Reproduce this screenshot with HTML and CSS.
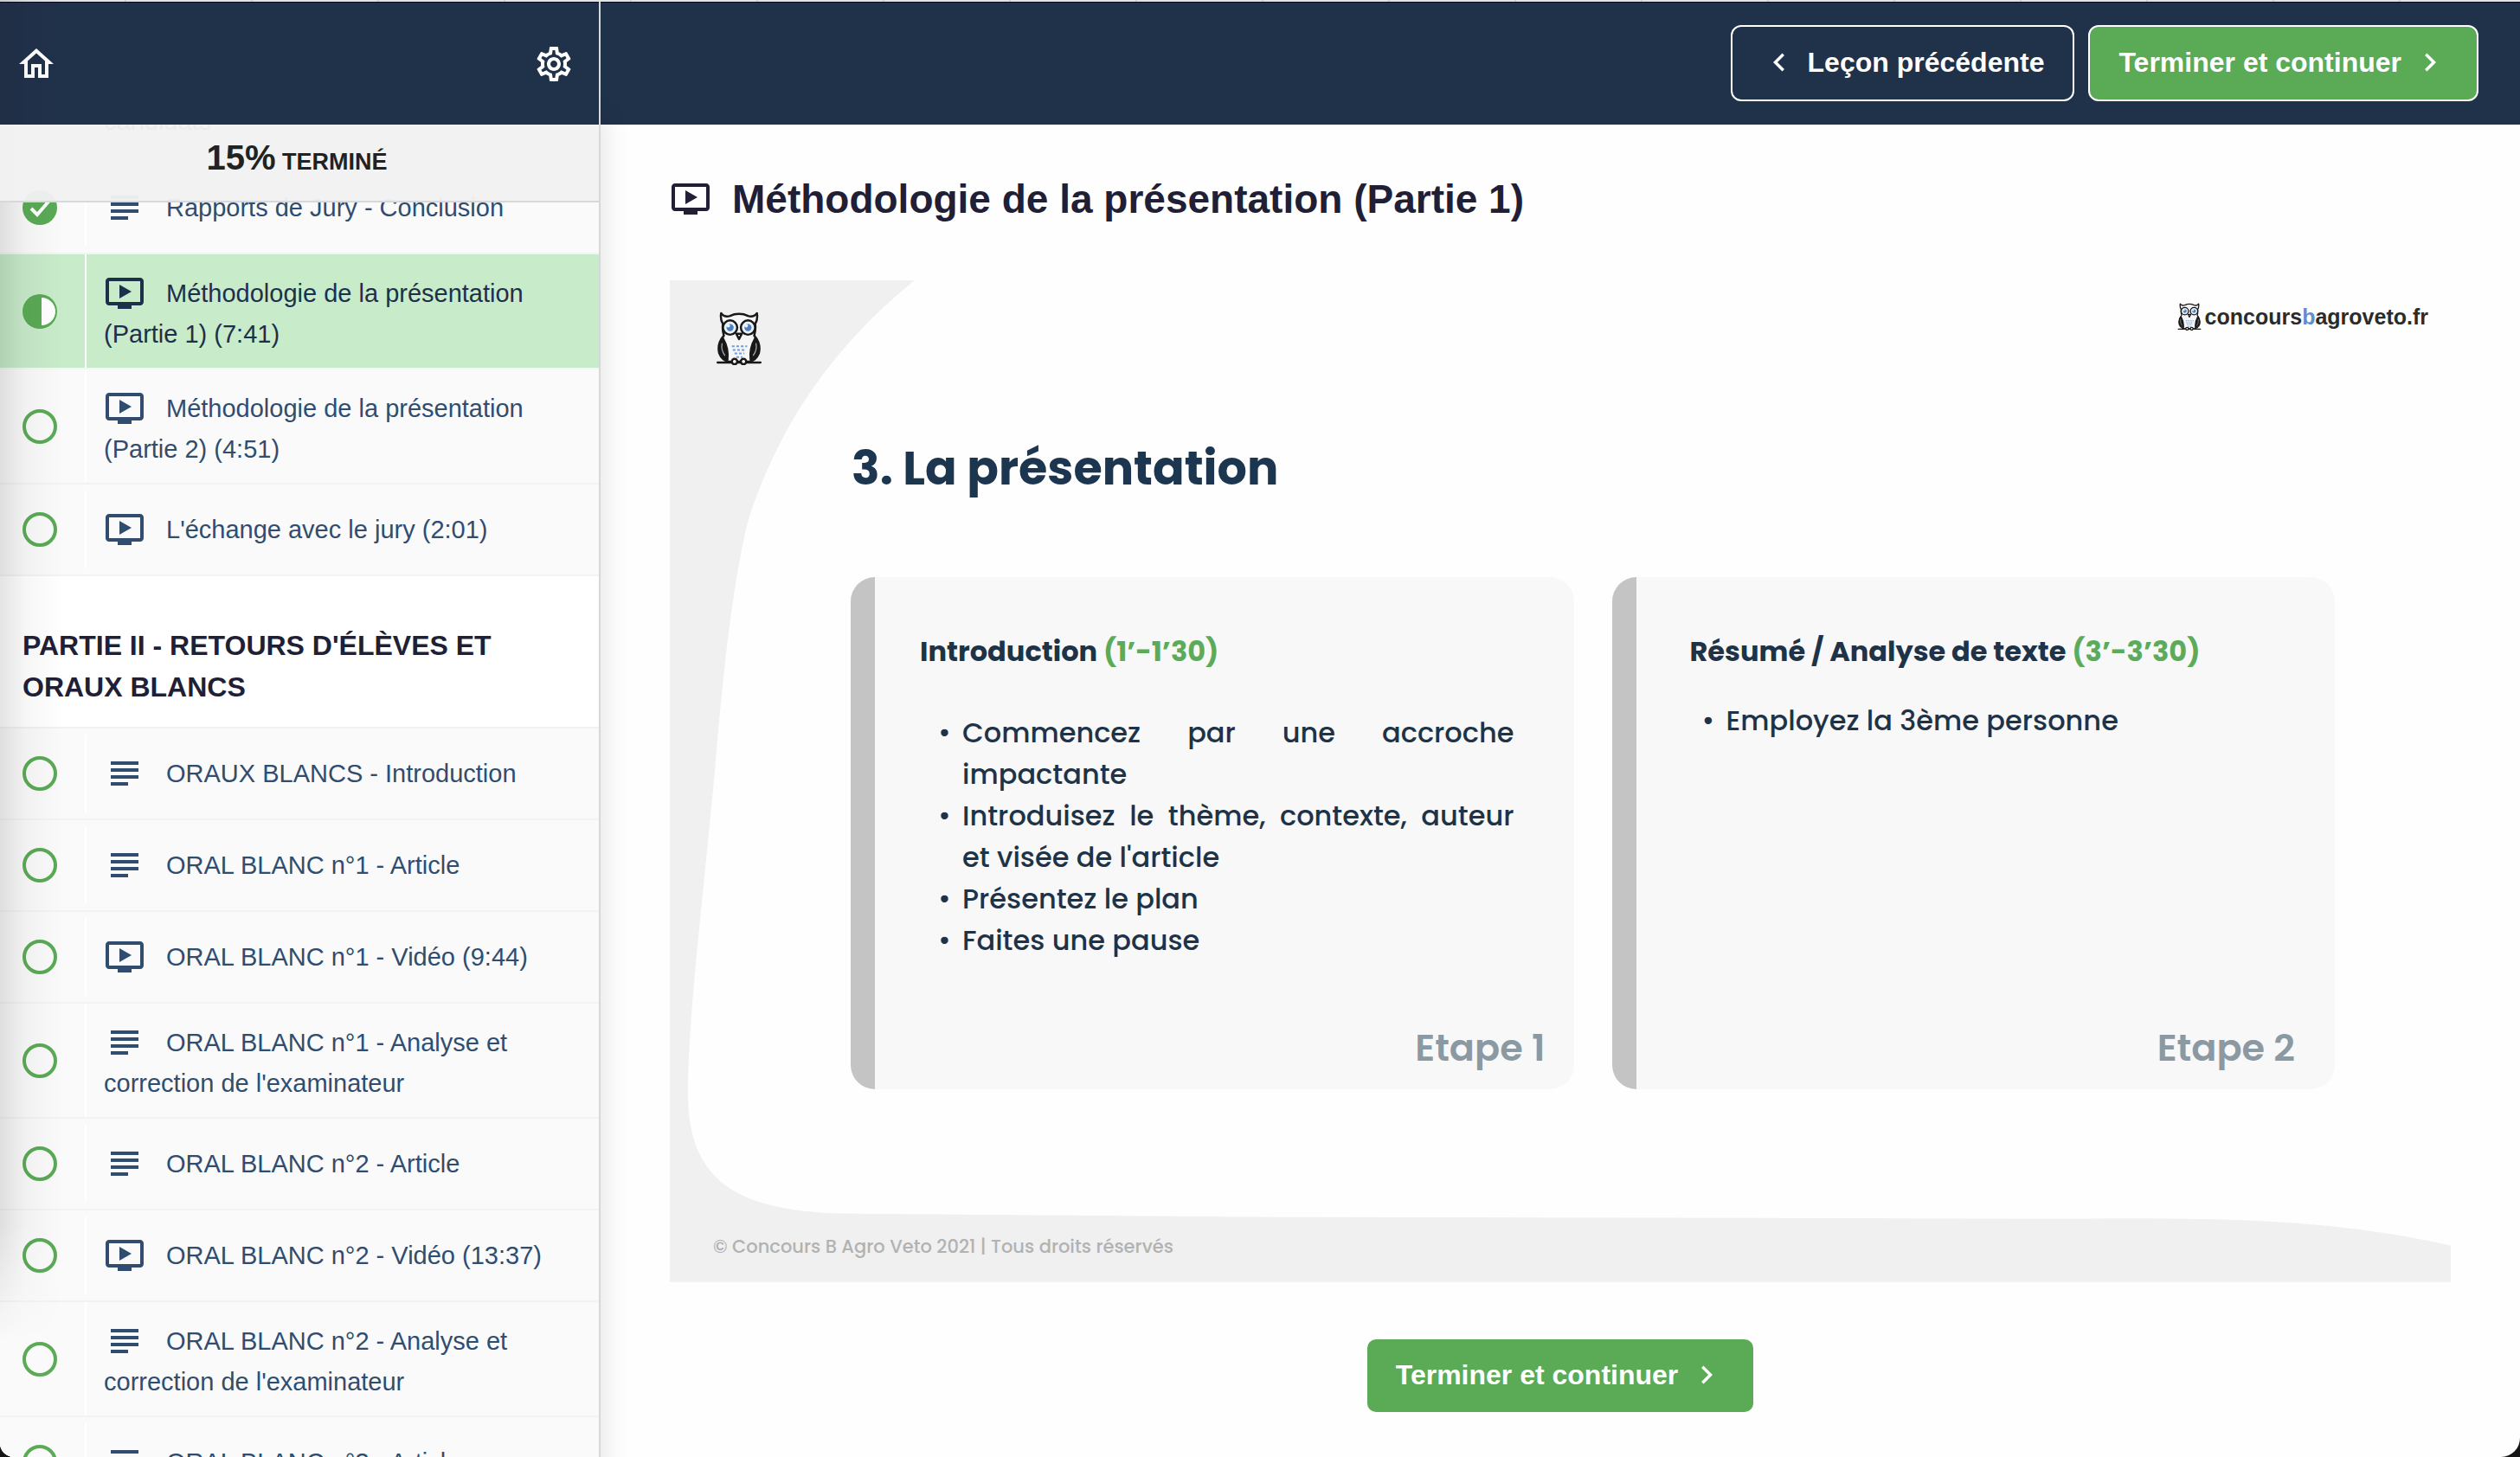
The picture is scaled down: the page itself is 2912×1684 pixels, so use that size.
FILE: index.html
```html
<!DOCTYPE html>
<html lang="fr">
<head>
<meta charset="utf-8">
<meta name="viewport" content="width=device-width, initial-scale=1">
<title>Méthodologie de la présentation (Partie 1)</title>
<link rel="stylesheet" href="styles.css">
</head>
<body>
<svg class="sprite" aria-hidden="true">
  <symbol id="i-home" viewBox="0 0 24 24"><path d="M12 5.69l5 4.5V18h-2v-6H9v6H7v-7.81l5-4.5M12 3L2 12h3v8h6v-6h2v6h6v-8h3L12 3z"/></symbol>
  <symbol id="i-gear" viewBox="0 0 24 24"><path d="M19.43 12.98c.04-.32.07-.64.07-.98 0-.34-.03-.66-.07-.98l2.11-1.65c.19-.15.24-.42.12-.64l-2-3.46c-.09-.16-.26-.25-.44-.25-.06 0-.12.01-.17.03l-2.49 1c-.52-.4-1.08-.73-1.69-.98l-.38-2.65C14.46 2.18 14.25 2 14 2h-4c-.25 0-.46.18-.49.42l-.38 2.65c-.61.25-1.17.59-1.69.98l-2.49-1c-.06-.02-.12-.03-.18-.03-.17 0-.34.09-.43.25l-2 3.46c-.13.22-.07.49.12.64l2.11 1.65c-.04.32-.07.65-.07.98 0 .33.03.66.07.98l-2.11 1.65c-.19.15-.24.42-.12.64l2 3.46c.09.16.26.25.44.25.06 0 .12-.01.17-.03l2.49-1c.52.4 1.08.73 1.69.98l.38 2.65c.03.24.24.42.49.42h4c.25 0 .46-.18.49-.42l.38-2.65c.61-.25 1.17-.59 1.69-.98l2.49 1c.06.02.12.03.18.03.17 0 .34-.09.43-.25l2-3.46c.12-.22.07-.49-.12-.64l-2.11-1.65zm-1.98-1.71c.04.31.05.52.05.73 0 .21-.02.43-.05.73l-.14 1.13.89.7 1.08.84-.7 1.21-1.27-.51-1.04-.42-.9.68c-.43.32-.84.56-1.25.73l-1.06.43-.16 1.13-.2 1.35h-1.4l-.19-1.35-.16-1.13-1.06-.43c-.43-.18-.83-.41-1.23-.71l-.91-.7-1.06.43-1.27.51-.7-1.21 1.08-.84.89-.7-.14-1.13c-.03-.31-.05-.54-.05-.74s.02-.43.05-.73l.14-1.13-.89-.7-1.08-.84.7-1.21 1.27.51 1.04.42.9-.68c.43-.32.84-.56 1.25-.73l1.06-.43.16-1.13.2-1.35h1.39l.19 1.35.16 1.13 1.06.43c.43.18.83.41 1.23.71l.91.7 1.06-.43 1.27-.51.7 1.21-1.07.85-.89.7.14 1.13zM12 8c-2.21 0-4 1.79-4 4s1.79 4 4 4 4-1.79 4-4-1.79-4-4-4zm0 6c-1.1 0-2-.9-2-2s.9-2 2-2 2 .9 2 2-.9 2-2 2z"/></symbol>
  <symbol id="i-video" viewBox="0 0 24 24"><path d="M21 3H3c-1.11 0-2 .89-2 2v12c0 1.1.89 2 2 2h5v2h8v-2h5c1.1 0 1.99-.9 1.99-2L23 5c0-1.11-.9-2-2-2zm0 14H3V5h18v12zm-5-6l-7 4V7z"/></symbol>
  <symbol id="i-text" viewBox="0 0 24 24"><path d="M4 5h16v2H4zM4 9h16v2H4zM4 13h16v2H4zM4 17h10v2H4z"/></symbol>
  <symbol id="i-left" viewBox="0 0 24 24"><path d="M15.41 7.41L14 6l-6 6 6 6 1.41-1.41L10.83 12z"/></symbol>
  <symbol id="i-right" viewBox="0 0 24 24"><path d="M10 6L8.59 7.41 13.17 12l-4.58 4.59L10 18l6-6z"/></symbol>
  <symbol id="i-done" viewBox="0 0 40 40"><circle cx="20" cy="20" r="20"/><path d="M10 21l7 7 13-15" fill="none" stroke="#fff" stroke-width="4"/></symbol>
  <symbol id="i-half" viewBox="0 0 40 40"><circle cx="20" cy="20" r="20"/><path d="M22 4a16 16 0 0 1 0 32z" fill="#fff"/></symbol>
  <symbol id="i-open" viewBox="0 0 40 40"><circle cx="20" cy="20" r="18" fill="none" stroke="#5aaa56" stroke-width="4"/></symbol>
  <symbol id="owl" viewBox="0 0 50 60">
    <g stroke="#181818" stroke-width="2.4" stroke-linejoin="round" stroke-linecap="round">
      <path fill="#f6f6f6" d="M5 2c3 4 7 4 10 3 6-3 14-3 20 0 3 1 7 1 10-3 1 6 0 9-2 12 1 5 0 9-1 13 5 6 7 13 5 20-2 5-6 8-10 9H13C9 55 5 52 3 47 1 40 3 33 8 27 7 23 6 19 7 14 5 11 4 8 5 2z"/>
      <path fill="#181818" d="M7 30c-6 8-5 19 5 24 1-8-1-17-5-24zM43 30c6 8 5 19-5 24-1-8 1-17 5-24z"/>
      <path fill="none" stroke="#aaa" stroke-width="1.2" d="M6 36c-1 5 0 9 3 13M44 36c1 5 0 9-3 13"/>
      <circle cx="15" cy="18" r="8" fill="#e9f1fa"/><circle cx="35" cy="18" r="8" fill="#e9f1fa"/>
      <path fill="#fff" d="M22 25h6l-3 6z"/>
      <path fill="none" d="M1 57h48"/>
      <circle cx="20" cy="56" r="3" fill="#fff"/><circle cx="30" cy="56" r="3" fill="#fff"/>
    </g>
    <circle cx="15" cy="18" r="4" fill="#4f80c2"/><circle cx="35" cy="18" r="4" fill="#4f80c2"/>
    <circle cx="13" cy="16" r="2" fill="#e9f1fa"/><circle cx="33" cy="16" r="2" fill="#e9f1fa"/>
    <path d="M17 39h17M18 43h15M20 47h11M22 51h7" fill="none" stroke="#6f9ed8" stroke-width="2" stroke-dasharray="3 2"/>
  </symbol>
</svg>

<div class="page">
  <div class="tab-strip"></div>
  <div class="layout">
    <aside class="sidebar">
      <header class="bar sidebar-bar">
        <a href="#" aria-label="Accueil"><svg class="icon"><use href="#i-home"/></svg></a>
        <button class="icon-button" type="button" aria-label="Paramètres"><svg class="icon"><use href="#i-gear"/></svg></button>
      </header>
      <div class="course">
        <p class="progress"><span class="progress-value">15%</span> TERMINÉ</p>
        <ul class="lessons scrolled">
          <li class="lesson lesson-previous"><span class="status"></span><a class="lesson-link" href="#">candidats</a></li>
          <li class="lesson"><span class="status"><svg><use href="#i-done"/></svg></span><a class="lesson-link" href="#"><svg class="icon"><use href="#i-text"/></svg>Rapports de Jury - Conclusion</a></li>
          <li class="lesson current"><span class="status"><svg><use href="#i-half"/></svg></span><a class="lesson-link" href="#"><svg class="icon"><use href="#i-video"/></svg>Méthodologie de la présentation (Partie 1) (7:41)</a></li>
          <li class="lesson"><span class="status"><svg><use href="#i-open"/></svg></span><a class="lesson-link" href="#"><svg class="icon"><use href="#i-video"/></svg>Méthodologie de la présentation (Partie 2) (4:51)</a></li>
          <li class="lesson"><span class="status"><svg><use href="#i-open"/></svg></span><a class="lesson-link" href="#"><svg class="icon"><use href="#i-video"/></svg>L'échange avec le jury (2:01)</a></li>
        </ul>
        <h2 class="section-title">PARTIE II - RETOURS D'ÉLÈVES ET ORAUX BLANCS</h2>
        <ul class="lessons">
          <li class="lesson"><span class="status"><svg><use href="#i-open"/></svg></span><a class="lesson-link" href="#"><svg class="icon"><use href="#i-text"/></svg>ORAUX BLANCS - Introduction</a></li>
          <li class="lesson"><span class="status"><svg><use href="#i-open"/></svg></span><a class="lesson-link" href="#"><svg class="icon"><use href="#i-text"/></svg>ORAL BLANC n°1 - Article</a></li>
          <li class="lesson"><span class="status"><svg><use href="#i-open"/></svg></span><a class="lesson-link" href="#"><svg class="icon"><use href="#i-video"/></svg>ORAL BLANC n°1 - Vidéo (9:44)</a></li>
          <li class="lesson"><span class="status"><svg><use href="#i-open"/></svg></span><a class="lesson-link" href="#"><svg class="icon"><use href="#i-text"/></svg>ORAL BLANC n°1 - Analyse et correction de l'examinateur</a></li>
          <li class="lesson"><span class="status"><svg><use href="#i-open"/></svg></span><a class="lesson-link" href="#"><svg class="icon"><use href="#i-text"/></svg>ORAL BLANC n°2 - Article</a></li>
          <li class="lesson"><span class="status"><svg><use href="#i-open"/></svg></span><a class="lesson-link" href="#"><svg class="icon"><use href="#i-video"/></svg>ORAL BLANC n°2 - Vidéo (13:37)</a></li>
          <li class="lesson"><span class="status"><svg><use href="#i-open"/></svg></span><a class="lesson-link" href="#"><svg class="icon"><use href="#i-text"/></svg>ORAL BLANC n°2 - Analyse et correction de l'examinateur</a></li>
          <li class="lesson"><span class="status"><svg><use href="#i-open"/></svg></span><a class="lesson-link" href="#"><svg class="icon"><use href="#i-text"/></svg>ORAL BLANC n°3 - Article</a></li>
        </ul>
      </div>
    </aside>

    <main class="main">
      <header class="bar main-bar">
        <button class="button button-outline" type="button"><svg><use href="#i-left"/></svg>Leçon précédente</button>
        <button class="button button-outline button-green" type="button">Terminer et continuer<svg><use href="#i-right"/></svg></button>
      </header>
      <div class="content">
        <h1 class="title"><svg class="icon"><use href="#i-video"/></svg>Méthodologie de la présentation (Partie 1)</h1>
        <section class="slide">
          <svg class="slide-shape" viewBox="0 0 2058 1158" preserveAspectRatio="none" aria-hidden="true"><path fill="#f0f0f0" d="M0 0H283C215 55 135 140 91 276C72 350 60 470 52 567C40 700 21 850 21 940C21 1040 75 1079 214 1079L700 1083L1626 1085C1800 1083 1930 1087 2058 1116V1158H0Z"/></svg>
          <div class="slide-top">
            <svg class="owl"><use href="#owl"/></svg>
            <div class="brand"><svg class="owl-small"><use href="#owl"/></svg><span>concours<span class="brand-b">b</span>agroveto.fr</span></div>
          </div>
          <h2 class="slide-title">3. La présentation</h2>
          <div class="cards">
            <article class="card">
              <h3>Introduction <span class="time">(1’-1’30)</span></h3>
              <ul>
                <li>Commencez par une accroche impactante</li>
                <li>Introduisez le thème, contexte, auteur et visée de l'article</li>
                <li>Présentez le plan</li>
                <li>Faites une pause</li>
              </ul>
              <p class="step">Etape 1</p>
            </article>
            <article class="card card-second">
              <h3>Résumé / Analyse de texte <span class="time">(3’-3’30)</span></h3>
              <ul>
                <li>Employez la 3ème personne</li>
              </ul>
              <p class="step">Etape 2</p>
            </article>
          </div>
          <p class="copyright">© Concours B Agro Veto 2021 | Tous droits réservés</p>
        </section>
        <button class="button button-green" type="button">Terminer et continuer<svg><use href="#i-right"/></svg></button>
      </div>
    </main>
  </div>
</div>
</body>
</html>
```
FILE: styles.css
```css
* {
  box-sizing: border-box;
}

html {
  background: #161616;
}

body {
  margin: 0;
  font-family: "Helvetica Neue", "Liberation Sans", Arial, sans-serif;
  color: #211f36;
}

h1, h2, h3, p, ul {
  margin: 0;
  padding: 0;
}

ul {
  list-style: none;
}

a {
  color: inherit;
  text-decoration: none;
}

.sprite {
  position: absolute;
  width: 0;
  height: 0;
}

.icon {
  width: 48px;
  height: 48px;
  fill: currentColor;
}

.page {
  position: relative;
  z-index: 0;
  display: flex;
  flex-direction: column;
  height: 100vh;
  overflow: hidden;
  background: #fefefe;
  border-radius: 0 0 22px 16px;
}

/* Soft shadow along the left edge of the window */
.page::after {
  content: "";
  position: absolute;
  top: 0;
  bottom: 0;
  left: 0;
  width: 72px;
  background: linear-gradient(to right, rgba(30, 30, 30, .12), rgba(30, 30, 30, .04) 40%, rgba(30, 30, 30, 0));
  -webkit-mask-image: linear-gradient(#000 84%, transparent 92%);
  mask-image: linear-gradient(#000 84%, transparent 92%);
  pointer-events: none;
}

.tab-strip {
  flex: none;
  height: 2px;
  background: repeating-linear-gradient(to right, #e1e3e7 0 144px, #cfd1d5 144px 146px);
}

.layout {
  display: flex;
  flex: 1;
  min-height: 0;
}

.bar {
  display: flex;
  flex: none;
  align-items: center;
  height: 142px;
  background: #20314a;
  border-top: 1px solid #04091c;
  color: #fff;
}

/* Sidebar */

.sidebar {
  position: relative;
  display: flex;
  flex: none;
  flex-direction: column;
  width: 694px;
  border-right: 2px solid #d5d9da;
  box-shadow: 4px 130px 28px rgba(0, 0, 0, .1);
}

.sidebar-bar {
  justify-content: space-between;
  padding: 0 28px 0 18px;
}

.sidebar-bar a,
.icon-button {
  display: flex;
}

.icon-button {
  padding: 0;
  border: 0;
  background: none;
  color: inherit;
}

.course {
  flex: 1;
  min-height: 0;
  overflow: hidden;
  background: #fff;
}

.progress {
  position: relative;
  z-index: 1;
  height: 90px;
  padding-right: 6px;
  border-bottom: 2px solid #d6d8d9;
  background: rgba(241, 241, 241, .96);
  color: #222;
  font-size: 27px;
  font-weight: 700;
  line-height: 76px;
  text-align: center;
}

.progress-value {
  font-size: 40px;
}

.scrolled {
  margin-top: -178px;
}

.lesson {
  display: flex;
  align-items: center;
  min-height: 106px;
  border-bottom: 2px solid #f1f4f2;
  background: #fafafa;
  color: #304d70;
}

.lesson-previous {
  min-height: 132px;
  align-items: flex-end;
}

.current {
  border-color: #f4f8f4;
  background: #c8ebca;
  color: #1d304b;
}

.status {
  display: flex;
  flex: none;
  justify-content: center;
  width: 98px;
  padding-right: 6px;
}

.status svg {
  width: 40px;
  height: 40px;
  fill: #5aaa56;
}

.lesson-link {
  flex: 1;
  min-height: 90px;
  padding: 21px 40px 16px 20px;
  border-left: 2px solid #fff;
  font-size: 29px;
  line-height: 46px;
}

.lesson-link .icon {
  margin-right: 24px;
  vertical-align: -14px;
}

.section-title {
  padding: 56px 60px 22px 26px;
  border-bottom: 2px solid #eef3ee;
  font-size: 32px;
  line-height: 48px;
}

/* Main column */

.main {
  flex: 1;
  min-width: 0;
}

.main-bar {
  justify-content: flex-end;
  gap: 16px;
  padding: 0 48px 2px;
}

.button {
  display: inline-flex;
  align-items: center;
  gap: 12px;
  height: 84px;
  padding: 0 33px 2px;
  border: 0;
  border-radius: 10px;
  color: #fff;
  font: 700 32px/48px "Helvetica Neue", "Liberation Sans", Arial, sans-serif;
}

.button svg {
  width: 42px;
  height: 42px;
  fill: currentColor;
}

.button-outline {
  height: 88px;
  border: 2px solid #fff;
  border-radius: 12px;
  background: none;
}

.button-green {
  background: #5aaa56;
}

.content {
  display: flex;
  flex-direction: column;
  align-items: center;
  padding: 58px 80px 52px;
}

.title {
  display: flex;
  align-items: center;
  align-self: stretch;
  gap: 24px;
  margin-bottom: 66px;
  font-size: 46px;
  line-height: 56px;
}

/* Lesson slide */

.slide {
  position: relative;
  display: flex;
  flex-direction: column;
  align-self: stretch;
  aspect-ratio: 16 / 9;
  margin-bottom: 66px;
  color: #1e3348;
  font-family: Poppins, Inter, sans-serif;
}

.slide-shape {
  position: absolute;
  inset: 0;
  width: 100%;
  height: 100%;
  z-index: -1;
}

.slide-top {
  display: flex;
  justify-content: space-between;
  height: 185px;
  padding: 26px 26px 0 54px;
}

.owl {
  width: 52px;
  height: 62px;
  margin-top: 10px;
}

.brand {
  display: flex;
  align-items: center;
  gap: 4px;
  height: 32px;
  color: #2b2b2b;
  font: 700 25px/32px "Liberation Sans", Arial, sans-serif;
}

.brand-b {
  color: #5b8fd0;
}

.owl-small {
  width: 28px;
  height: 32px;
}

.slide-title {
  padding-left: 210px;
  color: #1c3650;
  font-size: 54px;
  line-height: 64px;
}

.cards {
  display: grid;
  grid-template-columns: 1fr 1fr;
  gap: 44px;
  margin-top: 94px;
  padding: 0 134px 0 209px;
}

.card {
  display: flex;
  flex-direction: column;
  min-height: 592px;
  padding: 62px 33px 24px 80px;
  border-radius: 28px;
  background: linear-gradient(to right, #c4c4c4 28px, #f8f8f8 28px);
}

.card h3 {
  margin-bottom: 46px;
  font-size: 32px;
  line-height: 48px;
}

.time {
  color: #5cab5a;
}

.card ul {
  padding: 0 36px 0 49px;
  font-size: 32px;
  font-weight: 500;
  line-height: 48px;
  text-align: justify;
}

.card li::before {
  content: "•";
  float: left;
  width: 28px;
  margin-left: -28px;
}

.step {
  margin-top: auto;
  color: #8b99a3;
  font-size: 43px;
  font-weight: 600;
  line-height: 48px;
  text-align: right;
}

.card-second {
  padding-left: 90px;
  padding-right: 46px;
}

.card-second h3 {
  margin-bottom: 32px;
}

.card-second ul {
  padding-left: 42px;
}

.copyright {
  margin-top: auto;
  padding: 0 50px 25px;
  color: #b2b2b2;
  font-size: 21px;
  font-weight: 500;
  line-height: 32px;
}
```
